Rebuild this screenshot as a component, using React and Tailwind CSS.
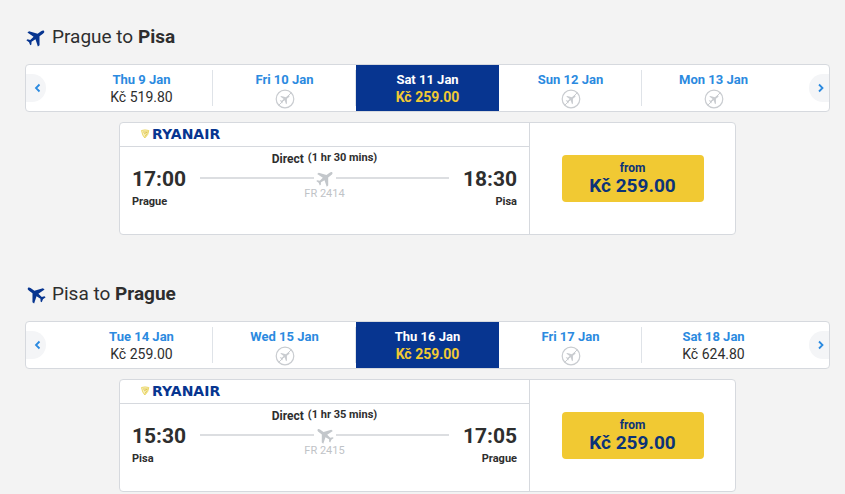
import React from "react";

const plane =
  "M12 1c1.100 0 1.700 1.300 1.700 2.800V8.500l7.800 5.800v2.300l-7.800-2.600-.5 5 2.300 1.900v1.600l-3.500-1-3.500 1v-1.600l2.300-1.900-.5-5-7.800 2.600v-2.300l7.800-5.800V3.800C10.300 2.300 10.900 1 12 1Z";

function Plane({ className }) {
  return (
    <svg viewBox="0 0 24 24" fill="currentColor" className={className} aria-hidden="true">
      <path d={plane} />
    </svg>
  );
}

function NoFlight() {
  return (
    <svg viewBox="0 0 20 20" className="block size-5 text-[#c9ccd0]" role="img" aria-label="No flights">
      <circle cx="10" cy="10" r="8.800" fill="none" stroke="currentColor" strokeWidth="1.2" />
      <path d={plane} fill="currentColor" transform="translate(10 10) rotate(53) scale(.5) translate(-12 -12)" />
      <path d="M3.800 16.200 16.200 3.800" stroke="currentColor" strokeWidth="1" />
    </svg>
  );
}

function Chevron({ right }) {
  return (
    <button
      type="button"
      aria-label={right ? "Later dates" : "Earlier dates"}
      className={
        right
          ? "flex h-7 w-5 shrink-0 items-center justify-center rounded-l-full bg-[#f4f5f7] pl-1 text-[#2b8ae0]"
          : "flex h-7 w-5 shrink-0 items-center justify-center rounded-r-full bg-[#f4f5f7] pl-1 text-[#2b8ae0]"
      }
    >
      <svg viewBox="0 0 8 10" className="h-[10px] w-2" fill="none" stroke="currentColor" strokeWidth="1.8" aria-hidden="true">
        <path d={right ? "M2 1.500 5.500 5 2 8.500" : "M5.500 1.500 2 5l3.500 3.500"} />
      </svg>
    </button>
  );
}

function Day({ date, price, selected }) {
  return (
    <button
      type="button"
      aria-pressed={!!selected}
      className={
        selected
          ? "flex h-full flex-1 flex-col items-center bg-[#073590] pt-[6px]"
          : "flex h-full flex-1 flex-col items-center pt-[6px]"
      }
    >
      <span className={selected ? "text-[13px] leading-[18px] font-bold text-white" : "text-[13px] leading-[18px] font-bold text-[#2b8ae0]"}>
        {date}
      </span>
      {price ? (
        <span className={selected ? "text-sm leading-[17px] font-bold text-[#f1c933]" : "text-sm leading-[17px] text-[#2e2e2e]"}>
          {price}
        </span>
      ) : (
        <NoFlight />
      )}
    </button>
  );
}

function Logo() {
  return (
    <div className="flex h-full items-center pl-5">
      <svg viewBox="0 -4 90 20" className="h-5 w-[90px]" role="img" aria-label="Ryanair">
        <path d="M1.500 1.500Q5 .3 8.800 1.500 8.500 6 4.800 9 2.200 6.500 1.500 1.500Z" fill="#f8f1c0" stroke="#e9d45c" strokeWidth=".9" />
        <path d="M3 3h4.500M4 5l3.500-2M5 7.500l2-3" stroke="#dcbf3c" strokeWidth=".8" fill="none" />
        <text x="12" y="10" fill="#073590" fontFamily="'DejaVu Sans', Verdana, sans-serif" fontWeight="700" fontSize="14">
          RYANAIR
        </text>
      </svg>
    </div>
  );
}

function Stop({ time, city, end }) {
  return (
    <div className={end ? "text-right" : ""}>
      <div className="text-[21px] leading-6 font-bold">{time}</div>
      <div className="mt-[3px] text-[11px] leading-4 font-bold">{city}</div>
    </div>
  );
}

function Flight({ flight, back }) {
  return (
    <article className="mx-auto flex h-[113px] w-[617px] max-w-full rounded border border-[#d6d9de] bg-white">
      <div className="flex flex-1 flex-col border-r border-[#d6d9de]">
        <div className="h-6 border-b border-[#d6d9de]">
          <Logo />
        </div>
        <div className="flex px-3 pt-5">
          <Stop time={flight.depart} city={flight.from} />
          <div className="mx-[14px] -mt-4 flex-1 text-center">
            <div className="flex items-start justify-center gap-1 font-bold">
              <span className="text-xs leading-4">Direct</span>
              <span className="text-[11px] leading-[14px]">({flight.duration})</span>
            </div>
            <div className="mt-px flex items-center gap-px">
              <span className="h-[2px] flex-1 bg-[#dcdee1]" />
              <Plane className={back ? "size-5 -rotate-53 text-[#c3c7cb]" : "size-5 rotate-53 text-[#c3c7cb]"} />
              <span className="h-[2px] flex-1 bg-[#dcdee1]" />
            </div>
            <div className="text-[11px] leading-3 text-[#bfc3c7]">{flight.number}</div>
          </div>
          <Stop time={flight.arrive} city={flight.to} end />
        </div>
      </div>
      <div className="flex w-[205px] items-center justify-center">
        <button
          type="button"
          className="flex h-[47px] w-[142px] flex-col items-center justify-center rounded bg-[#f1c933] text-[#0c3378]"
        >
          <span className="text-xs leading-[14px] font-bold">from</span>
          <span className="text-[19px] leading-[22px] font-bold">Kč 259.00</span>
        </button>
      </div>
    </article>
  );
}

function Journey({ flight, days, back }) {
  return (
    <section>
      <h2 className="flex h-6 items-center gap-[5px] text-[19px]">
        <Plane className={back ? "size-[22px] -rotate-53 text-[#073590]" : "size-[22px] rotate-53 text-[#073590]"} />
        <span>
          {flight.from} to <b>{flight.to}</b>
        </span>
      </h2>
      <div className="mt-[15px] mb-[10px] flex h-12 items-center justify-between rounded border border-[#d6d9de] bg-white">
        <Chevron />
        <div className="mx-6 flex h-full flex-1 items-center">
          {days.map((day, i) => (
            <React.Fragment key={day.date}>
              {i > 0 && !days[i - 1].selected && <span className="-ml-px h-9 w-px bg-[#dfe3e8]" />}
              <Day {...day} />
            </React.Fragment>
          ))}
        </div>
        <Chevron right />
      </div>
      <Flight flight={flight} back={back} />
    </section>
  );
}

export default function App() {
  return (
    <main className="flex min-h-screen flex-col gap-[47px] bg-[#f3f3f3] pt-[25px] pr-[15px] pl-[25px] font-[Roboto,sans-serif] text-[#2e2e2e]">
      <Journey
        flight={{ from: "Prague", to: "Pisa", depart: "17:00", arrive: "18:30", duration: "1 hr 30 mins", number: "FR 2414" }}
        days={[
          { date: "Thu 9 Jan", price: "Kč 519.80" },
          { date: "Fri 10 Jan" },
          { date: "Sat 11 Jan", price: "Kč 259.00", selected: true },
          { date: "Sun 12 Jan" },
          { date: "Mon 13 Jan" },
        ]}
      />
      <Journey
        back
        flight={{ from: "Pisa", to: "Prague", depart: "15:30", arrive: "17:05", duration: "1 hr 35 mins", number: "FR 2415" }}
        days={[
          { date: "Tue 14 Jan", price: "Kč 259.00" },
          { date: "Wed 15 Jan" },
          { date: "Thu 16 Jan", price: "Kč 259.00", selected: true },
          { date: "Fri 17 Jan" },
          { date: "Sat 18 Jan", price: "Kč 624.80" },
        ]}
      />
    </main>
  );
}
